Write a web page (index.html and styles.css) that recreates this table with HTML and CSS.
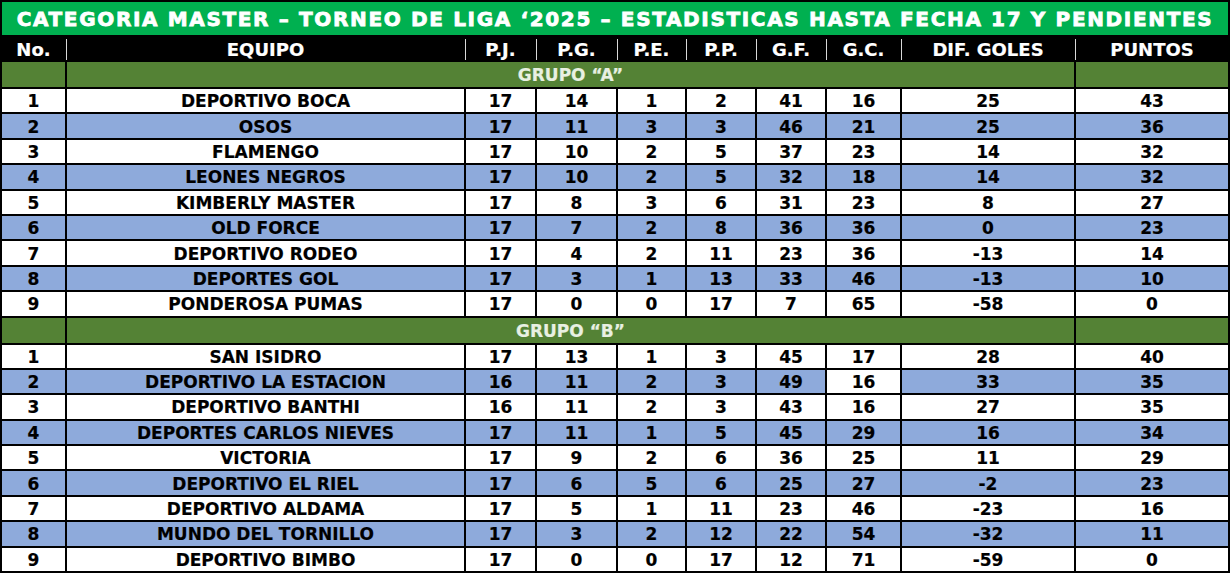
FILE: index.html
```html
<!DOCTYPE html>
<html lang="es">
<head>
<meta charset="utf-8">
<title>Categoria Master – Estadisticas</title>
<link rel="stylesheet" href="styles.css">
</head>
<body>
<div class="sheet">
  <div class="title">CATEGORIA MASTER – TORNEO DE LIGA ‘2025 – ESTADISTICAS HASTA FECHA 17 Y PENDIENTES</div>

  <div class="row head">
    <div class="h first">No.</div><div class="h">EQUIPO</div><div class="h">P.J.</div><div class="h">P.G.</div><div class="h">P.E.</div><div class="h">P.P.</div><div class="h">G.F.</div><div class="h">G.C.</div><div class="h">DIF. GOLES</div><div class="h">PUNTOS</div>
  </div>

  <div class="row group"><div class="g"></div><div class="g label">GRUPO “A”</div><div class="g"></div></div>
  <div class="row"><div>1</div><div>DEPORTIVO BOCA</div><div>17</div><div>14</div><div>1</div><div>2</div><div>41</div><div>16</div><div>25</div><div>43</div></div>
  <div class="row alt"><div>2</div><div>OSOS</div><div>17</div><div>11</div><div>3</div><div>3</div><div>46</div><div>21</div><div>25</div><div>36</div></div>
  <div class="row"><div>3</div><div>FLAMENGO</div><div>17</div><div>10</div><div>2</div><div>5</div><div>37</div><div>23</div><div>14</div><div>32</div></div>
  <div class="row alt"><div>4</div><div>LEONES NEGROS</div><div>17</div><div>10</div><div>2</div><div>5</div><div>32</div><div>18</div><div>14</div><div>32</div></div>
  <div class="row"><div>5</div><div>KIMBERLY MASTER</div><div>17</div><div>8</div><div>3</div><div>6</div><div>31</div><div>23</div><div>8</div><div>27</div></div>
  <div class="row alt"><div>6</div><div>OLD FORCE</div><div>17</div><div>7</div><div>2</div><div>8</div><div>36</div><div>36</div><div>0</div><div>23</div></div>
  <div class="row"><div>7</div><div>DEPORTIVO RODEO</div><div>17</div><div>4</div><div>2</div><div>11</div><div>23</div><div>36</div><div>-13</div><div>14</div></div>
  <div class="row alt"><div>8</div><div>DEPORTES GOL</div><div>17</div><div>3</div><div>1</div><div>13</div><div>33</div><div>46</div><div>-13</div><div>10</div></div>
  <div class="row"><div>9</div><div>PONDEROSA PUMAS</div><div>17</div><div>0</div><div>0</div><div>17</div><div>7</div><div>65</div><div>-58</div><div>0</div></div>

  <div class="row group"><div class="g"></div><div class="g label">GRUPO “B”</div><div class="g"></div></div>
  <div class="row"><div>1</div><div>SAN ISIDRO</div><div>17</div><div>13</div><div>1</div><div>3</div><div>45</div><div>17</div><div>28</div><div>40</div></div>
  <div class="row alt"><div>2</div><div>DEPORTIVO LA ESTACION</div><div>16</div><div>11</div><div>2</div><div>3</div><div>49</div><div class="plain">16</div><div>33</div><div>35</div></div>
  <div class="row"><div>3</div><div>DEPORTIVO BANTHI</div><div>16</div><div>11</div><div>2</div><div>3</div><div>43</div><div>16</div><div>27</div><div>35</div></div>
  <div class="row alt"><div>4</div><div>DEPORTES CARLOS NIEVES</div><div>17</div><div>11</div><div>1</div><div>5</div><div>45</div><div>29</div><div>16</div><div>34</div></div>
  <div class="row"><div>5</div><div>VICTORIA</div><div>17</div><div>9</div><div>2</div><div>6</div><div>36</div><div>25</div><div>11</div><div>29</div></div>
  <div class="row alt"><div>6</div><div>DEPORTIVO EL RIEL</div><div>17</div><div>6</div><div>5</div><div>6</div><div>25</div><div>27</div><div>-2</div><div>23</div></div>
  <div class="row"><div>7</div><div>DEPORTIVO ALDAMA</div><div>17</div><div>5</div><div>1</div><div>11</div><div>23</div><div>46</div><div>-23</div><div>16</div></div>
  <div class="row alt"><div>8</div><div>MUNDO DEL TORNILLO</div><div>17</div><div>3</div><div>2</div><div>12</div><div>22</div><div>54</div><div>-32</div><div>11</div></div>
  <div class="row"><div>9</div><div>DEPORTIVO BIMBO</div><div>17</div><div>0</div><div>0</div><div>17</div><div>12</div><div>71</div><div>-59</div><div>0</div></div>
</div>
</body>
</html>
```

FILE: styles.css
```css
html, body {
  margin: 0;
  padding: 0;
  background: #ffffff;
}

.sheet {
  display: grid;
  width: 1230px;
  box-sizing: border-box;
  padding: 2px;
  gap: 2px;
  background: #000000;
  grid-template-columns: 63px 397px 69px 79px 67px 68px 68px 73px 172px 152px;
  grid-template-rows: 33px 23px 25px repeat(9, 23.4px) 25px repeat(9, 23.4px);
  font-family: "DejaVu Sans", sans-serif;
  font-weight: bold;
  font-size: 17px;
  color: #000000;
  -webkit-text-stroke: 0.2px currentColor;
}

.title {
  grid-column: 1 / -1;
  background: #00b050;
  color: #ffffff;
  font-family: "DejaVu Sans", sans-serif;
  font-weight: bold;
  font-size: 20px;
  letter-spacing: 1.65px;
  -webkit-text-stroke: 0.8px #ffffff;
  display: flex;
  align-items: center;
  justify-content: center;
  white-space: nowrap;
  padding-top: 1px;
}

.row {
  display: contents;
}

.row > div {
  background: #ffffff;
  display: flex;
  align-items: center;
  justify-content: center;
  white-space: nowrap;
  line-height: 1;
  padding-top: 2px;
}

.row.alt > div {
  background: #8eaadb;
}

.row.alt > div.plain {
  background: #ffffff;
}

.row.head > div {
  background: #000000;
  color: #ffffff;
  padding-top: 0;
  font-size: 18px;
}

.row.head > .h {
  margin-left: -1px;
  border-left: 1px solid #d9d9d9;
  margin-top: 2px;
  margin-bottom: 0;
}

.row.head > .h.first {
  margin-left: 0;
  border-left: 0;
}

.row.group > .g {
  background: #548235;
  color: #e8f0e2;
}

.row.group > .label {
  grid-column: 2 / 10;
}
```
